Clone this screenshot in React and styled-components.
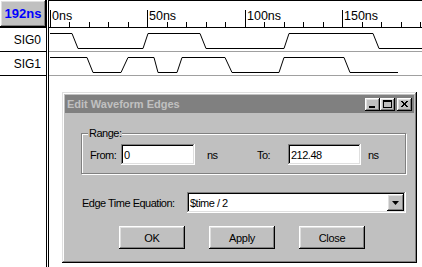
import React from "react";
import styled, { createGlobalStyle } from "styled-components";

const GlobalStyle = createGlobalStyle`
  body {
    margin: 0;
    background: #fff;
  }
`;

const raised = `
  box-shadow: inset -1px -1px #000, inset 1px 1px #fff,
    inset -2px -2px #808080, inset 2px 2px #dfdfdf;
`;

const sunken = `
  box-shadow: inset -1px -1px #fff, inset 1px 1px #808080,
    inset -2px -2px #dfdfdf, inset 2px 2px #000;
`;

const SIGNALS = [
  {
    name: "SIG0",
    edges: [
      [50, 1], [72, 1], [78, 0], [143, 0], [148, 1], [200, 1], [206, 0],
      [284, 0], [289, 1], [373, 1], [379, 0], [422, 0],
    ],
  },
  {
    name: "SIG1",
    edges: [
      [50, 1], [87, 1], [93, 0], [121, 0], [128, 1], [154, 1], [158, 0],
      [177, 0], [182, 1], [225, 1], [232, 0], [279, 0], [284, 1], [344, 1],
      [350, 0], [398, 0],
    ],
  },
];

const MAIN_X = 49;

const App = () => {
  const ticks = [];
  for (let i = 0; i < 20; i++) {
    ticks.push({ x: Math.floor(50 + 19.5 * i) - MAIN_X, major: i % 5 === 0, ns: i * 10 });
  }

  return (
    <Screen>
      <GlobalStyle />
      <LeftPanel>
        <TimeButton>192ns</TimeButton>
        {SIGNALS.map((s) => (
          <SignalName key={s.name}>{s.name}</SignalName>
        ))}
      </LeftPanel>
      <Divider />
      <Main>
        <Ruler>
          <svg width="373" height="26">
            {ticks.map((t) => (
              <g key={t.ns}>
                <line
                  x1={t.x + 0.5}
                  x2={t.x + 0.5}
                  y1={t.major ? 9 : 21}
                  y2={26}
                  stroke="#000"
                  shapeRendering="crispEdges"
                />
                {t.major && (
                  <text x={t.x + 2} y={19} fontSize="12.5" fontFamily="Liberation Sans, Arial, sans-serif">
                    {t.ns}ns
                  </text>
                )}
              </g>
            ))}
          </svg>
        </Ruler>
        {SIGNALS.map((s) => (
          <WaveRow key={s.name}>
            <svg width="373" height="23">
              <polyline
                fill="none"
                stroke="#000"
                strokeWidth="1"
                points={s.edges
                  .map(([x, v]) => `${x - MAIN_X},${v ? 5.5 : 20.5}`)
                  .join(" ")}
              />
            </svg>
          </WaveRow>
        ))}
      </Main>

      <Window>
        <TitleBar>
          <TitleText>Edit Waveform Edges</TitleText>
          <TitleButton aria-label="Minimize">
            <svg width="15" height="13">
              <rect x="4" y="8" width="6" height="2" fill="#000" />
            </svg>
          </TitleButton>
          <TitleButton aria-label="Maximize">
            <svg width="15" height="13">
              <rect x="3.5" y="2.5" width="8" height="7" fill="none" stroke="#000" />
              <rect x="3" y="3" width="9" height="1" fill="#000" />
            </svg>
          </TitleButton>
          <TitleButton aria-label="Close" $gap={2}>
            <svg width="15" height="13">
              <path d="M4 3 L10 9 M5 3 L11 9 M10 3 L4 9 M11 3 L5 9" stroke="#000" shapeRendering="crispEdges" />
            </svg>
          </TitleButton>
        </TitleBar>

        <Body>
          <Group>
            <Caption>Range:</Caption>
            <FieldRow>
              <FieldLabel $width={31}>From:</FieldLabel>
              <TextInput $width={74} defaultValue="0" />
              <Unit $gap={12} $width={50}>ns</Unit>
              <FieldLabel $width={31}>To:</FieldLabel>
              <TextInput $width={73} defaultValue="212.48" />
              <Unit $gap={7}>ns</Unit>
            </FieldRow>
          </Group>

          <EqRow>
            <FieldLabel $width={105}>Edge Time Equation:</FieldLabel>
            <Combo>
              <ComboText>$time / 2</ComboText>
              <DropButton>
                <svg width="7" height="4">
                  <path d="M0 0 H7 L3.5 4 Z" fill="#000" />
                </svg>
              </DropButton>
            </Combo>
          </EqRow>

          <ButtonRow>
            <Button>OK</Button>
            <Button>Apply</Button>
            <Button>Close</Button>
          </ButtonRow>
        </Body>
      </Window>
    </Screen>
  );
};

const Screen = styled.div`
  position: relative;
  width: 422px;
  height: 267px;
  overflow: hidden;
  display: flex;
  background: #fff;
  font-family: "Liberation Sans", Arial, sans-serif;
`;

const LeftPanel = styled.div`
  width: 46px;
  display: flex;
  flex-direction: column;
`;

const TimeButton = styled.div`
  height: 27px;
  border-bottom: 1px solid #000;
  background: #c0c0c0;
  ${raised}
  color: #0000ff;
  font-weight: bold;
  font-size: 13px;
  display: flex;
  align-items: center;
  justify-content: center;
`;

const SignalName = styled.div`
  height: 23px;
  border-bottom: 1px solid #000;
  font-size: 12px;
  display: flex;
  align-items: center;
  justify-content: flex-end;
  padding-right: 5px;
`;

const Divider = styled.div`
  width: 1px;
  border-left: 1px solid #000;
  border-right: 1px solid #000;
  background: #fff;
`;

const Main = styled.div`
  flex: 1;
  min-width: 0;
  display: flex;
  flex-direction: column;
`;

const Ruler = styled.div`
  height: 26px;
  border-top: 1px solid #000;
  border-bottom: 1px solid #000;
  svg {
    display: block;
  }
`;

const WaveRow = styled.div`
  height: 23px;
  border-bottom: 1px solid #a0a0a0;
  svg {
    display: block;
  }
`;

const Window = styled.div`
  position: absolute;
  left: 62px;
  top: 92px;
  width: 355px;
  height: 171px;
  box-sizing: border-box;
  padding: 3px;
  background: #c0c0c0;
  box-shadow: inset -1px -1px #000, inset 1px 1px #dfdfdf,
    inset -2px -2px #808080, inset 2px 2px #fff;
  display: flex;
  flex-direction: column;
  font-size: 11px;
`;

const TitleBar = styled.div`
  height: 18px;
  background: #808080;
  display: flex;
  align-items: center;
  padding: 0 2px;
`;

const TitleText = styled.div`
  flex: 1;
  color: #c0c0c0;
  font-weight: bold;
  font-size: 11px;
`;

const TitleButton = styled.button`
  width: 15px;
  height: 13px;
  margin-left: ${(p) => p.$gap || 0}px;
  padding: 0;
  border: none;
  background: #c0c0c0;
  ${raised}
  svg {
    display: block;
  }
`;

const Body = styled.div`
  flex: 1;
  padding: 20px 8px 0 16px;
  letter-spacing: -0.5px;
`;

const Group = styled.div`
  position: relative;
  border: 1px solid #808080;
  box-shadow: inset 1px 1px #fff, 1px 1px #fff;
  padding: 10px 0 8px 8px;
`;

const Caption = styled.span`
  position: absolute;
  top: -7px;
  left: 6px;
  padding: 0 1px;
  line-height: 13px;
  background: #c0c0c0;
`;

const FieldRow = styled.div`
  display: flex;
  align-items: center;
`;

const FieldLabel = styled.span`
  width: ${(p) => p.$width}px;
  flex-shrink: 0;
`;

const TextInput = styled.input`
  width: ${(p) => p.$width}px;
  height: 21px;
  box-sizing: border-box;
  border: none;
  outline: none;
  padding: 0 0 0 3px;
  background: #fff;
  ${sunken}
  font-family: inherit;
  font-size: 11px;
  letter-spacing: -0.5px;
`;

const Unit = styled.span`
  margin-left: ${(p) => p.$gap}px;
  width: ${(p) => (p.$width ? `${p.$width}px` : "auto")};
`;

const EqRow = styled.div`
  display: flex;
  align-items: center;
  margin-top: 18px;
  padding-left: 1px;
`;

const Combo = styled.div`
  width: 219px;
  height: 21px;
  box-sizing: border-box;
  background: #fff;
  ${sunken}
  display: flex;
  align-items: center;
  padding: 2px;
`;

const ComboText = styled.span`
  flex: 1;
  padding-left: 1px;
`;

const DropButton = styled.div`
  width: 17px;
  height: 17px;
  background: #c0c0c0;
  ${raised}
  display: flex;
  align-items: center;
  justify-content: center;
`;

const ButtonRow = styled.div`
  display: flex;
  gap: 24px;
  margin-top: 13px;
  padding-left: 38px;
`;

const Button = styled.button`
  width: 66px;
  height: 23px;
  border: none;
  padding: 0;
  background: #c0c0c0;
  ${raised}
  font-family: inherit;
  font-size: 11px;
  letter-spacing: -0.3px;
  color: #000;
`;

export default App;
